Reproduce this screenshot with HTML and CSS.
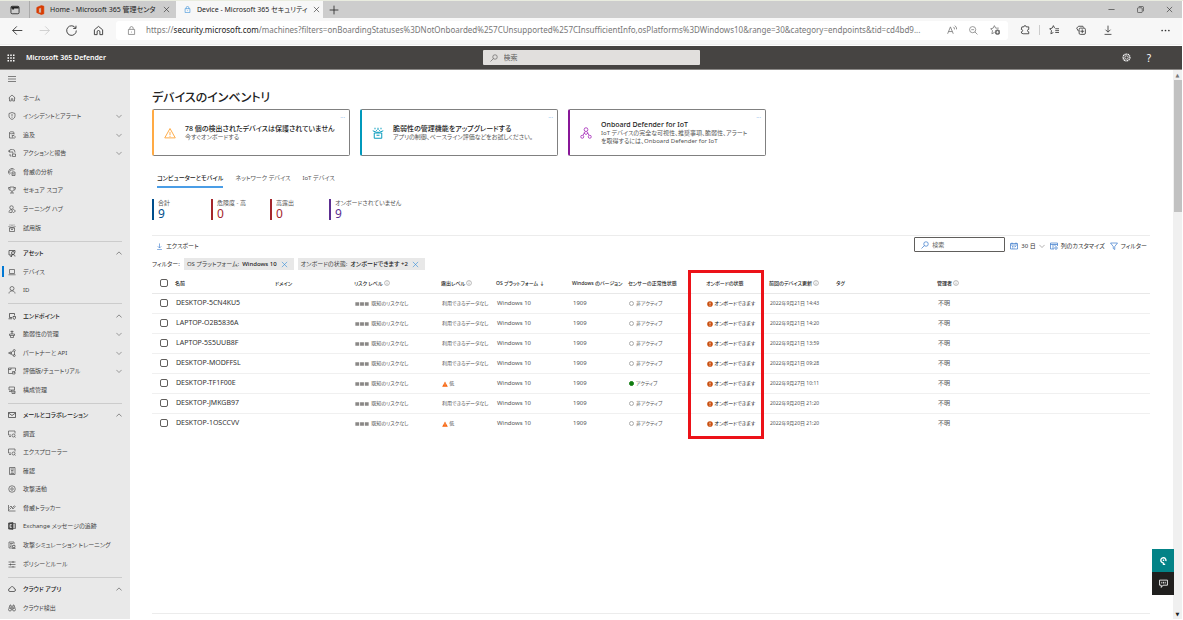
FILE: index.html
```html
<!DOCTYPE html>
<html lang="ja">
<head>
<meta charset="utf-8">
<title>Device - Microsoft 365 セキュリティ</title>
<link rel="stylesheet" href="styles.css">
</head>
<body>
<svg class="defs" aria-hidden="true">
  <symbol id="down" viewBox="0 0 16 16"><path d="M1 5l7 7 7-7"/></symbol>
  <symbol id="up" viewBox="0 0 16 16"><path d="M1 12l7-7 7 7"/></symbol>
  <symbol id="x" viewBox="0 0 16 16"><path d="M2 2l12 12M14 2L2 14"/></symbol>
  <symbol id="search" viewBox="0 0 16 16"><circle cx="10" cy="6" r="4.5"/><path d="M7 9l-6 6"/></symbol>
  <symbol id="info" viewBox="0 0 16 16"><circle cx="8" cy="8" r="6.5"/><path d="M8 7v5M8 4v1.500"/></symbol>
  <symbol id="home" viewBox="0 0 16 16"><path d="M1.500 8L8 2l6.500 6M3 7v7h3.500V9.500h3V14H13V7"/></symbol>
  <symbol id="shield" viewBox="0 0 16 16"><path d="M8 1l6 2v5c0 3-2 5-6 7-4-2-6-4-6-7V3zM8 4v5M8 10.500v1.500"/></symbol>
  <symbol id="hunt" viewBox="0 0 16 16"><path d="M10 14H3V3c0-2 9-2 9 0v4M3 4c2 2 7 2 9 0M8 9h4l3 3-3 3-3-3z"/></symbol>
  <symbol id="action" viewBox="0 0 16 16"><path d="M2 6a6 6 0 1112 1M2 2v4h4M8 4v4h3M4 10v4h3M9 10h6v5H9z"/></symbol>
  <symbol id="finger" viewBox="0 0 16 16"><path d="M3 13a7 7 0 1110-10M5 11a4 4 0 116-5M8 8h6v7H8zM10 10v3M12 11v2"/></symbol>
  <symbol id="trophy" viewBox="0 0 16 16"><path d="M4 2h8v5c0 4-8 4-8 0zM4 3H1c0 4 1 5 3 5M12 3h3c0 4-1 5-3 5M8 10v4M4 14h8"/></symbol>
  <symbol id="learn" viewBox="0 0 16 16"><circle cx="7" cy="5" r="3.500"/><path d="M2 15c0-4 2-6 6-6M7 12l4-3 4 3-4 3zM3 15h5"/></symbol>
  <symbol id="gift" viewBox="0 0 16 16"><path d="M3 8v7h10V8M1 5l5 2h4l5-2M3 8h10M6 11h4M4 1v2M8 1v3M12 1v2M6 4v1M10 4v1"/></symbol>
  <symbol id="assets" viewBox="0 0 16 16"><path d="M9 12H2V3h12v4M5 15h3"/><circle cx="10" cy="8" r="3"/><path d="M6 15c0-5 8-5 8 0"/></symbol>
  <symbol id="laptop" viewBox="0 0 16 16"><path d="M3 3h10v8H3zM1 13.500h14"/></symbol>
  <symbol id="person" viewBox="0 0 16 16"><circle cx="8" cy="5" r="4"/><path d="M2 15c0-7 12-7 12 0"/></symbol>
  <symbol id="endpoint" viewBox="0 0 16 16"><path d="M8 11H3V3h10v4M1 13.500h7M10 9h5v3c0 1-1 2-2.500 3C11 14 10 13 10 12z"/></symbol>
  <symbol id="vuln" viewBox="0 0 16 16"><path d="M8 1v7M5 3h6M3 8h10v3H3zM5 11v4h6v-4M7 6h2"/></symbol>
  <symbol id="partner" viewBox="0 0 16 16"><path d="M0 8h5M10 4L6 7v3l5 3M13 5v7"/><circle cx="12.500" cy="3" r="2"/><circle cx="12.500" cy="13" r="2"/><circle cx="5" cy="8" r="2"/></symbol>
  <symbol id="eval" viewBox="0 0 16 16"><path d="M8 13H1V2h14v6M1 5h5V2M9 9h5v5H9zM11 11h3"/></symbol>
  <symbol id="config" viewBox="0 0 16 16"><path d="M2 2h11v6H2zM7 8v3H2M8 10h6v5H8zM10 12h4"/></symbol>
  <symbol id="mail" viewBox="0 0 16 16"><path d="M1 3h14v10H1zM1 4l7 5 7-5"/></symbol>
  <symbol id="inspect" viewBox="0 0 16 16"><path d="M6 10H1V2h13v5M2 13h4M15 15l-2-2"/><circle cx="11" cy="11" r="3"/></symbol>
  <symbol id="review" viewBox="0 0 16 16"><path d="M3 1h11v14H3zM5 4h7M6 7h5M6 10h5M5 13h7"/></symbol>
  <symbol id="target" viewBox="0 0 16 16"><circle cx="8" cy="8" r="6.500"/><circle cx="8" cy="8" r="2.500"/></symbol>
  <symbol id="chart" viewBox="0 0 16 16"><path d="M1 2v12h14M3 11l4-4 3 3 5-6M3 7l3-3 3 3 4-4"/></symbol>
  <symbol id="exchange" viewBox="0 0 16 16"><path d="M10 3h5v10h-5M11 6h4M11 10h4"/><path d="M1 2l9-1v14l-9-1z" fill="currentColor"/><path d="M7.500 5H4v6h3.500M4 8h3" stroke="#fff"/></symbol>
  <symbol id="sim" viewBox="0 0 16 16"><path d="M8 14H2V2h10v5M4 5h6M4 8h4M4 11h3M9 9h5v4H9zM8 15h7"/></symbol>
  <symbol id="rules" viewBox="0 0 16 16"><path d="M1 4h14M1 9h14M1 14h14M10 2v4M5 7v4M10 12v3"/></symbol>
  <symbol id="cloud" viewBox="0 0 16 16"><path d="M4 13a3 3 0 010-6c1-5 8-5 8 0 4 0 4 6 0 6z"/></symbol>
  <symbol id="bino" viewBox="0 0 16 16"><circle cx="4" cy="11" r="3"/><circle cx="12" cy="11" r="3"/><path d="M2 8l2-6h2v9M14 8l-2-6h-2v9M6 6h4"/></symbol>
  <symbol id="warn" viewBox="0 0 16 16"><path d="M8 2l7 12.500H1zM8 6.500V11M8 12v1.200"/></symbol>
  <symbol id="lock" viewBox="0 0 16 16"><path d="M2.500 6h11v9h-11zM5 6V4a3 3 0 016 0v2M8 10v1.500"/></symbol>
  <symbol id="download" viewBox="0 0 16 16"><path d="M8 1v10M4 7.500L8 11.500l4-4M2.500 15h11"/></symbol>
  <symbol id="calendar" viewBox="0 0 16 16"><path d="M1 3h14v11H1zM1 6h14M4 1v3M12 1v3M4 9h2M7 9h2M10 9h2M4 12h2M7 12h2"/></symbol>
  <symbol id="columns" viewBox="0 0 16 16"><path d="M8 14H1V2h14v6M1 5h14M6 5v9M10 5v3"/><circle cx="12" cy="12" r="2.500"/></symbol>
  <symbol id="funnel" viewBox="0 0 16 16"><path d="M1 2h14L9.500 9v6l-3-2V9z"/></symbol>
  <symbol id="alertdot" viewBox="0 0 16 16"><circle cx="8" cy="8" r="7.500" fill="#ca5010" stroke="none"/><path d="M8 4v5M8 10.500v2" stroke="#fff" stroke-width="2"/></symbol>
  <symbol id="lowtri" viewBox="0 0 16 16"><path d="M8 1l7.500 14H.5z" fill="#f7630c" stroke="none"/><path d="M8 6v4M8 12v1.500" stroke="#fff"/></symbol>
  <symbol id="nolevel" viewBox="0 0 40 16"><path d="M1 3h11v10H1zM14.500 3h11v10h-11zM28 3h11v10H28z" fill="#8a8886" stroke="none"/></symbol>
</svg>

<div class="tabstrip">
  <button class="tabmenu" aria-label="タブ操作メニュー"><svg class="i10" viewBox="0 0 16 16"><rect x="1.500" y="2" width="13" height="12" rx="2"/><path d="M2 4h12M5 5v2" stroke-width="3"/></svg></button>
  <div class="btab"><svg class="i10 office" viewBox="0 0 16 16"><path d="M10 1l4 1v12l-4 1-7-3 7 1V4L6 5v6l-3 1V4z"/></svg><span class="btitle">Home - Microsoft 365 管理センタ</span><button aria-label="タブを閉じる"><svg class="i7"><use href="#x"/></svg></button></div>
  <div class="btab current"><svg class="i7 blue"><use href="#lock"/></svg><span class="btitle">Device - Microsoft 365 セキュリティ</span><button aria-label="タブを閉じる"><svg class="i7"><use href="#x"/></svg></button></div>
  <button class="newtab" aria-label="新しいタブ"><svg class="i10" viewBox="0 0 16 16"><path d="M8 1v14M1 8h14"/></svg></button>
  <div class="winbtns">
    <button aria-label="最小化"><svg class="i7" viewBox="0 0 16 16"><path d="M1 8h14"/></svg></button>
    <button aria-label="元に戻す"><svg class="i7" viewBox="0 0 16 16"><rect x="1" y="4" width="11" height="11" rx="2"/><path d="M4 1h8q3 0 3 3v8"/></svg></button>
    <button aria-label="閉じる"><svg class="i7"><use href="#x"/></svg></button>
  </div>
</div>

<div class="navbar">
  <div class="navbtns">
    <button aria-label="戻る"><svg class="i11" viewBox="0 0 16 16"><path d="M15 8H1M7 2L1 8l6 6"/></svg></button>
    <button class="off" aria-label="進む"><svg class="i11" viewBox="0 0 16 16"><path d="M1 8h14M9 2l6 6-6 6"/></svg></button>
    <button aria-label="更新"><svg class="i11" viewBox="0 0 16 16"><path d="M14 4.500A7 7 0 1015 8M14.500 1v4h-4"/></svg></button>
    <button aria-label="ホーム"><svg class="i11" viewBox="0 0 16 16"><path d="M2 7l6-5 6 5v7h-4v-4a2 2 0 00-4 0v4H2z"/></svg></button>
  </div>
  <div class="address">
    <svg class="i9"><use href="#lock"/></svg>
    <span class="url">https://<b>security.microsoft.com</b>/machines?filters=onBoardingStatuses%3DNotOnboarded%257CUnsupported%257CInsufficientInfo,osPlatforms%3DWindows10&amp;range=30&amp;category=endpoints&amp;tid=cd4bd9...</span>
    <button aria-label="音声で読み上げる"><svg class="i10" viewBox="0 0 16 16"><path d="M1 14L5.500 3 10 14M2.500 10.500h6M10 3q2 1 2 4M12.500 1q3 2 3 6"/></svg></button>
    <button aria-label="ズーム"><svg class="i9" viewBox="0 0 16 16"><circle cx="6.500" cy="6.500" r="5.500"/><path d="M10.500 10.500L15 15M4 6.500h5"/></svg></button>
    <button aria-label="お気に入りに追加"><svg class="i10" viewBox="0 0 16 16"><path d="M7 12l-4 2 1-5-3-3 4-1 2-4 2 4h5"/><circle cx="12" cy="11.500" r="3.800" fill="#666"/><path d="M12 9.500v4M10 11.500h4" stroke="#fff"/></svg></button>
  </div>
  <div class="tools">
    <button aria-label="拡張機能"><svg class="i10" viewBox="0 0 16 16"><path d="M3 3h3a2 2 0 014 0h4v4a2 2 0 000 4v3H5a3 3 0 01-3-3c3 0 3-4 0-4z"/></svg></button>
    <span class="sep"></span>
    <button aria-label="お気に入り"><svg class="i10" viewBox="0 0 16 16"><path d="M7 12l-4 2 1-5-3-3 4-1 2-4 2 4M10 6h6M10 9h6M10 12h6"/></svg></button>
    <button aria-label="コレクション"><svg class="i10" viewBox="0 0 16 16"><path d="M4 10L1 5l3-3h7l1 2"/><rect x="5" y="5" width="10" height="10" rx="2"/><path d="M10 7v6M7 10h6"/></svg></button>
    <button aria-label="ダウンロード"><svg class="i10"><use href="#download"/></svg></button>
    <button class="more" aria-label="設定など"><svg class="i9 solid" viewBox="0 0 16 16"><circle cx="2" cy="8" r="1.500"/><circle cx="8" cy="8" r="1.500"/><circle cx="14" cy="8" r="1.500"/></svg></button>
  </div>
</div>

<header class="appbar">
  <div class="brand"><button aria-label="アプリ起動ツール"><svg class="i8 solid" viewBox="0 0 16 16"><path d="M1 1h3v3H1zM6.500 1h3v3h-3zM12 1h3v3h-3zM1 6.500h3v3H1zM6.500 6.500h3v3h-3zM12 6.500h3v3h-3zM1 12h3v3H1zM6.500 12h3v3h-3zM12 12h3v3h-3z"/></svg></button><strong>Microsoft 365 Defender</strong></div>
  <label class="appsearch"><svg class="i8"><use href="#search"/></svg><input type="search" placeholder="検索" aria-label="検索"></label>
  <div class="appbtns">
    <button aria-label="設定"><svg class="i9" viewBox="0 0 16 16"><circle cx="8" cy="8" r="6" stroke-dasharray="2 1" stroke-width="2.500"/><circle cx="8" cy="8" r="3"/></svg></button>
    <button aria-label="ヘルプ">?</button>
  </div>
</header>

<div class="body">
<nav class="side">
  <button class="burger" aria-label="メニュー"><svg class="i8" viewBox="0 0 16 16"><path d="M0 3h16M0 8h16M0 13h16"/></svg></button>
  <a href="#"><svg class="i8"><use href="#home"/></svg><span>ホーム</span></a>
  <a href="#"><svg class="i8"><use href="#shield"/></svg><span>インシデントとアラート</span><svg class="i6"><use href="#down"/></svg></a>
  <a href="#"><svg class="i8"><use href="#hunt"/></svg><span>追及</span><svg class="i6"><use href="#down"/></svg></a>
  <a href="#"><svg class="i8"><use href="#action"/></svg><span>アクションと報告</span><svg class="i6"><use href="#down"/></svg></a>
  <a href="#"><svg class="i8"><use href="#finger"/></svg><span>脅威の分析</span></a>
  <a href="#"><svg class="i8"><use href="#trophy"/></svg><span>セキュア スコア</span></a>
  <a href="#"><svg class="i8"><use href="#learn"/></svg><span>ラーニング ハブ</span></a>
  <a href="#"><svg class="i8"><use href="#gift"/></svg><span>試用版</span></a>
  <hr>
  <a href="#" class="head"><svg class="i8"><use href="#assets"/></svg><span>アセット</span><svg class="i6"><use href="#up"/></svg></a>
  <a href="#" class="on"><svg class="i8"><use href="#laptop"/></svg><span>デバイス</span></a>
  <a href="#"><svg class="i8"><use href="#person"/></svg><span>ID</span></a>
  <hr>
  <a href="#" class="head"><svg class="i8"><use href="#endpoint"/></svg><span>エンドポイント</span><svg class="i6"><use href="#up"/></svg></a>
  <a href="#"><svg class="i8"><use href="#vuln"/></svg><span>脆弱性の管理</span><svg class="i6"><use href="#down"/></svg></a>
  <a href="#"><svg class="i8"><use href="#partner"/></svg><span>パートナーと API</span><svg class="i6"><use href="#down"/></svg></a>
  <a href="#"><svg class="i8"><use href="#eval"/></svg><span>評価版/チュートリアル</span><svg class="i6"><use href="#down"/></svg></a>
  <a href="#"><svg class="i8"><use href="#config"/></svg><span>構成管理</span></a>
  <hr>
  <a href="#" class="head"><svg class="i8"><use href="#mail"/></svg><span>メールとコラボレーション</span><svg class="i6"><use href="#up"/></svg></a>
  <a href="#"><svg class="i8"><use href="#inspect"/></svg><span>調査</span></a>
  <a href="#"><svg class="i8"><use href="#inspect"/></svg><span>エクスプローラー</span></a>
  <a href="#"><svg class="i8"><use href="#review"/></svg><span>確認</span></a>
  <a href="#"><svg class="i8"><use href="#target"/></svg><span>攻撃活動</span></a>
  <a href="#"><svg class="i8"><use href="#chart"/></svg><span>脅威トラッカー</span></a>
  <a href="#"><svg class="i8"><use href="#exchange"/></svg><span>Exchange メッセージの追跡</span></a>
  <a href="#"><svg class="i8"><use href="#sim"/></svg><span>攻撃シミュレーション トレーニング</span></a>
  <a href="#"><svg class="i8"><use href="#rules"/></svg><span>ポリシーとルール</span></a>
  <hr>
  <a href="#" class="head"><svg class="i8"><use href="#cloud"/></svg><span>クラウド アプリ</span><svg class="i6"><use href="#up"/></svg></a>
  <a href="#"><svg class="i8"><use href="#bino"/></svg><span>クラウド検出</span></a>
</nav>

<main>
  <h1>デバイスのインベントリ</h1>
  <section class="cards">
    <article class="card orange"><svg class="i12"><use href="#warn"/></svg><div><h2>78 個の検出されたデバイスは保護されていません</h2><p>今すぐオンボードする</p></div><button aria-label="その他">···</button></article>
    <article class="card teal"><svg class="i12"><use href="#gift"/></svg><div><h2>脆弱性の管理機能をアップグレードする</h2><p>アプリの制御、ベースライン評価などをお試しください。</p></div><button aria-label="その他">···</button></article>
    <article class="card purple"><svg class="i12" viewBox="0 0 16 16"><circle cx="8" cy="3.500" r="2.500"/><circle cx="3" cy="13" r="2"/><circle cx="13" cy="13" r="2"/><path d="M7 6l-3 5M9 6l3 5M5 8l3 2 3-2"/></svg><div><h2>Onboard Defender for IoT</h2><p>IoT デバイスの完全な可視性、推奨事項、脆弱性、アラート<br>を取得するには、Onboard Defender for IoT</p></div><button aria-label="その他">···</button></article>
  </section>
  <div class="tabs"><button class="sel">コンピューターとモバイル</button><button>ネットワーク デバイス</button><button>IoT デバイス</button></div>
  <dl class="stats">
    <div class="navy"><dt>合計</dt><dd>9</dd></div>
    <div class="red"><dt>危険度 - 高</dt><dd>0</dd></div>
    <div class="red"><dt>高露出</dt><dd>0</dd></div>
    <div class="violet"><dt>オンボードされていません</dt><dd>9</dd></div>
  </dl>
  <div class="toolbar">
    <button class="export"><svg class="i7"><use href="#download"/></svg>エクスポート</button>
    <label class="find"><svg class="i8"><use href="#search"/></svg><input type="search" placeholder="検索" aria-label="デバイスの検索"></label>
    <button><svg class="i8"><use href="#calendar"/></svg>30 日<svg class="i6 grey"><use href="#down"/></svg></button>
    <button><svg class="i8"><use href="#columns"/></svg>列のカスタマイズ</button>
    <button><svg class="i8"><use href="#funnel"/></svg>フィルター</button>
  </div>
  <div class="filters">
    <span>フィルター:</span>
    <span class="chip">OS プラットフォーム: <b>Windows 10</b><button aria-label="削除"><svg class="i7"><use href="#x"/></svg></button></span>
    <span class="chip">オンボードの状態: <b>オンボードできます +2</b><button aria-label="削除"><svg class="i7"><use href="#x"/></svg></button></span>
  </div>
  <div class="tablebox">
    <table>
      <colgroup><col class="c-check"><col class="c-name"><col class="c-domain"><col class="c-risk"><col class="c-exp"><col class="c-os"><col class="c-ver"><col class="c-sensor"><col class="c-onb"><col class="c-upd"><col class="c-tag"><col></colgroup>
      <thead><tr><th><input type="checkbox" aria-label="すべて選択"></th><th>名前</th><th>ドメイン</th><th>リスク レベル <svg class="i6"><use href="#info"/></svg></th><th>露出レベル <svg class="i6"><use href="#info"/></svg></th><th>OS プラットフォーム ↓</th><th>Windows のバージョン</th><th>センサーの正常性状態</th><th>オンボードの状態</th><th>前回のデバイス更新 <svg class="i6"><use href="#info"/></svg></th><th>タグ</th><th>管理者 <svg class="i6"><use href="#info"/></svg></th></tr></thead>
      <tbody>
        <tr><td><input type="checkbox" aria-label="DESKTOP-5CN4KU5"></td><td class="name">DESKTOP-5CN4KU5</td><td></td><td><svg class="lvl"><use href="#nolevel"/></svg> 既知のリスクなし</td><td>利用できるデータなし</td><td class="mid">Windows 10</td><td class="mid">1909</td><td><i class="dot"></i>非アクティブ</td><td class="onb"><svg class="i6"><use href="#alertdot"/></svg> オンボードできます</td><td>2022年9月21日 14:43</td><td></td><td class="mid">不明</td></tr>
        <tr><td><input type="checkbox" aria-label="LAPTOP-O2B5836A"></td><td class="name">LAPTOP-O2B5836A</td><td></td><td><svg class="lvl"><use href="#nolevel"/></svg> 既知のリスクなし</td><td>利用できるデータなし</td><td class="mid">Windows 10</td><td class="mid">1909</td><td><i class="dot"></i>非アクティブ</td><td class="onb"><svg class="i6"><use href="#alertdot"/></svg> オンボードできます</td><td>2022年9月21日 14:20</td><td></td><td class="mid">不明</td></tr>
        <tr><td><input type="checkbox" aria-label="LAPTOP-5S5UUB8F"></td><td class="name">LAPTOP-5S5UUB8F</td><td></td><td><svg class="lvl"><use href="#nolevel"/></svg> 既知のリスクなし</td><td>利用できるデータなし</td><td class="mid">Windows 10</td><td class="mid">1909</td><td><i class="dot"></i>非アクティブ</td><td class="onb"><svg class="i6"><use href="#alertdot"/></svg> オンボードできます</td><td>2022年9月21日 13:59</td><td></td><td class="mid">不明</td></tr>
        <tr><td><input type="checkbox" aria-label="DESKTOP-MODFFSL"></td><td class="name">DESKTOP-MODFFSL</td><td></td><td><svg class="lvl"><use href="#nolevel"/></svg> 既知のリスクなし</td><td>利用できるデータなし</td><td class="mid">Windows 10</td><td class="mid">1909</td><td><i class="dot"></i>非アクティブ</td><td class="onb"><svg class="i6"><use href="#alertdot"/></svg> オンボードできます</td><td>2022年9月21日 09:28</td><td></td><td class="mid">不明</td></tr>
        <tr><td><input type="checkbox" aria-label="DESKTOP-TF1F00E"></td><td class="name">DESKTOP-TF1F00E</td><td></td><td><svg class="lvl"><use href="#nolevel"/></svg> 既知のリスクなし</td><td><svg class="i6"><use href="#lowtri"/></svg> 低</td><td class="mid">Windows 10</td><td class="mid">1909</td><td><i class="dot live"></i>アクティブ</td><td class="onb"><svg class="i6"><use href="#alertdot"/></svg> オンボードできます</td><td>2022年9月27日 10:11</td><td></td><td class="mid">不明</td></tr>
        <tr><td><input type="checkbox" aria-label="DESKTOP-JMKGB97"></td><td class="name">DESKTOP-JMKGB97</td><td></td><td><svg class="lvl"><use href="#nolevel"/></svg> 既知のリスクなし</td><td>利用できるデータなし</td><td class="mid">Windows 10</td><td class="mid">1909</td><td><i class="dot"></i>非アクティブ</td><td class="onb"><svg class="i6"><use href="#alertdot"/></svg> オンボードできます</td><td>2022年9月20日 21:20</td><td></td><td class="mid">不明</td></tr>
        <tr><td><input type="checkbox" aria-label="DESKTOP-1OSCCVV"></td><td class="name">DESKTOP-1OSCCVV</td><td></td><td><svg class="lvl"><use href="#nolevel"/></svg> 既知のリスクなし</td><td><svg class="i6"><use href="#lowtri"/></svg> 低</td><td class="mid">Windows 10</td><td class="mid">1909</td><td><i class="dot"></i>非アクティブ</td><td class="onb"><svg class="i6"><use href="#alertdot"/></svg> オンボードできます</td><td>2022年9月20日 21:20</td><td></td><td class="mid">不明</td></tr>
      </tbody>
    </table>
    <div class="highlight"></div>
  </div>
</main>
<div class="scroll"><span class="arrow">▲</span><span class="thumb"></span><span class="arrow end">▼</span></div>
</div>

<div class="float">
  <button class="help" aria-label="ヘルプ"><svg class="i9" viewBox="0 0 16 16"><path d="M8 12a4.500 4.500 0 114-3M8 6v3M8 12v3h3" stroke-width="2.500"/></svg></button>
  <button class="feedback" aria-label="フィードバック"><svg class="i9" viewBox="0 0 16 16"><path d="M1 2h14v9H7l-3 4v-4H1zM5 5v3M8 5v3M11 5v3" stroke-width="1.500"/></svg></button>
</div>
</body>
</html>
```
FILE: styles.css
```css
* { box-sizing: border-box; }
html, body { height: 100%; }
body {
  margin: 0;
  display: flex;
  flex-direction: column;
  padding: 0 1px 1px 0;
  overflow: hidden;
  background: #fff;
  color: #323130;
  font-family: "Noto Sans", "Noto Sans CJK JP", sans-serif;
  font-size: 7px;
  line-height: 10px;
  font-feature-settings: "palt";
  border-top: 1px solid #e9ecdf;
}
button {
  margin: 0; padding: 0; border: 0; background: none; color: inherit; font: inherit;
  font-feature-settings: inherit;
  display: inline-flex; align-items: center; justify-content: center; white-space: nowrap;
}
input { font: inherit; font-feature-settings: inherit; color: inherit; margin: 0; }
input[type=search] { border: 0; padding: 0; background: none; min-width: 0; flex: 1; appearance: none; }
input::placeholder { color: #605e5c; opacity: 1; }
svg { fill: none; stroke: currentColor; stroke-width: 1.3; flex: none; display: block; }
.defs { display: none; }
.solid { fill: currentColor; stroke: none; }
.i6 { width: 6px; height: 6px; }
.i7 { width: 7px; height: 7px; }
.i8 { width: 8px; height: 8px; }
.i9 { width: 9px; height: 9px; }
.i10 { width: 10px; height: 10px; }
.i11 { width: 11px; height: 11px; }
.i12 { width: 12px; height: 12px; }
.blue { color: #2b88d8; }
.grey { color: #605e5c; }

/* Browser chrome */
.tabstrip { display: flex; background: #cdcdcd; height: 17px; flex: none; color: #222; }
.tabmenu { width: 29px; }
.btab { width: 147px; display: flex; align-items: center; gap: 5px; padding: 0 6px 0 5px; border-left: 1px solid #aaa; }
.btab.current { background: #f7f7f7; border: 0; padding-left: 8px; gap: 6px; }
.btitle { flex: 1; white-space: nowrap; }
.office { color: #d83b01; fill: currentColor; }
.newtab { width: 21px; }
.winbtns { margin-left: auto; display: flex; gap: 22px; padding-right: 9px; }
.navbar { display: flex; align-items: center; background: #f7f7f7; height: 27px; padding-bottom: 2px; flex: none; color: #333; border-bottom: 1px solid #eee; }
.navbtns { display: flex; gap: 16px; padding: 0 12px; }
.off { color: #ccc; }
.address { flex: 1; min-width: 0; display: flex; align-items: center; gap: 12px; background: #fff; height: 19px; padding: 0 8px 0 11px; border-radius: 3px; color: #777; }
.address > svg { margin-right: -2px; }
.url { flex: 1; min-width: 0; overflow: hidden; white-space: nowrap; font-size: 8px; }
.url b { font-weight: 400; color: #222; }
.tools { display: flex; align-items: center; gap: 17px; padding: 0 12px; }
.tools .sep { width: 1px; height: 10px; background: #ccc; margin: 0 -8px; }
.more { margin-left: 31px; }

/* Application bar */
.appbar {
  display: grid; grid-template-columns: 1fr 217px 1fr; align-items: center;
  height: 24px; margin-top: 1px; background: #464442; color: #fff; flex: none;
  border-bottom: 1px solid #8a8886;
}
.brand { display: flex; align-items: center; gap: 11px; padding-left: 7px; }
.brand strong { font-size: 7px; font-weight: 600; }
.appsearch { display: flex; align-items: center; gap: 6px; height: 15px; padding: 0 7px; background: #e1dfdd; border-radius: 1px; color: #605e5c; }
.appbtns { display: flex; justify-content: flex-end; gap: 16px; padding-right: 31px; font-size: 10px; }

.body { flex: 1; min-height: 0; display: flex; }

/* Side navigation */
.side { width: 130px; flex: none; background: #e9e9e9; display: flex; flex-direction: column; padding: 0 8px 2px; overflow: hidden; }
.side a, .burger { flex: 1 0 18px; display: flex; align-items: center; justify-content: flex-start; gap: 7px; color: #444; text-decoration: none; font-size: 6px; white-space: nowrap; position: relative; }
.side a span { flex: 1; }
.side .head { color: #222; font-weight: 500; }
.side hr { width: 100%; height: 1px; margin: 4px 0 2px; border: 0; background: #ccc; flex: none; }
.side .on::before { content: ""; position: absolute; left: -6px; top: 4px; bottom: 4px; width: 2px; background: #0078d4; }

main { flex: 1; min-width: 0; padding: 19px 23px 0 22px; display: flex; flex-direction: column; }
h1 { margin: 0 0 3px; font-size: 12px; line-height: 17px; font-weight: 500; color: #222; }

/* Notification cards */
.cards { display: flex; gap: 10px; }
.card { width: 198px; min-height: 47px; display: flex; align-items: center; gap: 9px; padding: 0 10px; border: 1px solid #808080; border-left: 2px solid; border-radius: 2px; position: relative; }
.card h2 { margin: 0; font-size: 7px; line-height: 9px; font-weight: 500; color: #222; }
.card p { margin: 0; font-size: 6px; line-height: 8px; color: #555; white-space: nowrap; }
.card button { position: absolute; right: 4px; top: 2px; color: #2b88d8; font-size: 6px; }
.card.orange { border-left-color: #ffaa44; }
.orange svg { color: #ffaa44; }
.card.teal { border-left-color: #0099bc; }
.teal svg { color: #0099bc; }
.card.purple { border-left-color: #881798; }
.purple svg { color: #b146c2; }

.tabs { display: flex; gap: 12px; padding: 14px 5px 0; color: #555; font-size: 6px; }
.tabs button { height: 18px; border-bottom: 2px solid transparent; }
.tabs .sel { border-color: #4a9de6; color: #222; font-weight: 500; }

.stats { display: flex; margin: 11px 0 15px; }
.stats div { min-width: 59px; height: 21px; padding-left: 4px; border-left: 2px solid; }
.stats dt { font-size: 6px; line-height: 8px; color: #555; white-space: nowrap; }
.stats dd { margin: 0; font-size: 12px; line-height: 13px; }
.navy { color: #004e8c; }
.red { color: #a4262c; }
.violet { color: #5c2e91; }

/* Command row and filters */
.toolbar { display: flex; align-items: flex-end; gap: 5px; padding: 1px 3px 0 4px; border-top: 1px solid #ececec; font-size: 6px; line-height: 12px; }
.toolbar button { gap: 3px; }
.toolbar svg { color: #2b6fc8; }
.toolbar .grey { color: #605e5c; }
.export { margin-right: auto; }
.find { display: flex; align-items: center; gap: 3px; width: 91px; height: 15px; padding: 0 6px; border: 1px solid #605e5c; border-radius: 1px; }
.filters { display: flex; align-items: center; gap: 4px; margin-top: 6px; font-size: 6px; white-space: nowrap; }
.chip { display: flex; align-items: center; gap: 3px; height: 12px; padding: 0 6px 0 3px; background: #e8e8e8; color: #444; }
.chip b { font-weight: 500; color: #222; }
.chip button { color: #2b88d8; margin-left: 1px; }

/* Device table */
.tablebox { position: relative; flex: 1; border-bottom: 1px solid #ececec; margin-bottom: 5px; padding-top: 3px; }
table { width: 100%; border-collapse: collapse; table-layout: fixed; }
.c-check { width: 23px; } .c-name { width: 100px; } .c-domain { width: 79px; } .c-risk { width: 87px; }
.c-exp { width: 55px; } .c-os { width: 76px; } .c-ver { width: 56px; } .c-sensor { width: 78px; }
.c-onb { width: 63px; } .c-upd { width: 67px; } .c-tag { width: 101px; }
th, td { height: 20px; padding: 0; border-bottom: 1px solid #f0f0f0; text-align: left; font-size: 5px; line-height: 8px; white-space: nowrap; font-weight: 400; color: #555; }
th { color: #222; font-weight: 500; border-bottom: 1px solid #e8e8e8; }
td { padding-left: 1px; }
tbody tr:last-child td { border-bottom: 0; }
th svg, td svg { display: inline-block; vertical-align: middle; color: #777; }
th:first-child, td:first-child { padding-left: 8px; }
td.name { font-size: 7px; color: #333; }
td.mid { font-size: 6px; }
td.onb { color: #222; }
.lvl { width: 14px; height: 6px; margin-right: 1px; }
.dot { display: inline-block; width: 5px; height: 5px; border: 1px solid #aaa; border-radius: 50%; margin-right: 2px; vertical-align: middle; }
.live { background: #107c10; border-color: #107c10; }
input[type=checkbox] { appearance: none; width: 8px; height: 8px; border: 1px solid #605e5c; border-radius: 2px; display: block; background: #fff; }
.highlight { position: absolute; left: 536px; top: 0; width: 76px; height: 169px; border: 3px solid #ec1218; pointer-events: none; }

/* Page scrollbar and floating buttons */
.scroll { width: 9px; flex: none; background: #f0f0f0; display: flex; flex-direction: column; align-items: center; }
.thumb { width: 8px; height: 132px; background: #c1c1c1; }
.arrow { font-size: 5px; line-height: 10px; color: #777; font-family: "DejaVu Sans", sans-serif; }
.arrow.end { margin-top: auto; color: #222; }
.float { position: fixed; right: 9px; bottom: 25px; display: flex; flex-direction: column; color: #fff; }
.float button { width: 22px; height: 23px; }
.help { background: #038387; }
.feedback { background: #201f1e; }
```
